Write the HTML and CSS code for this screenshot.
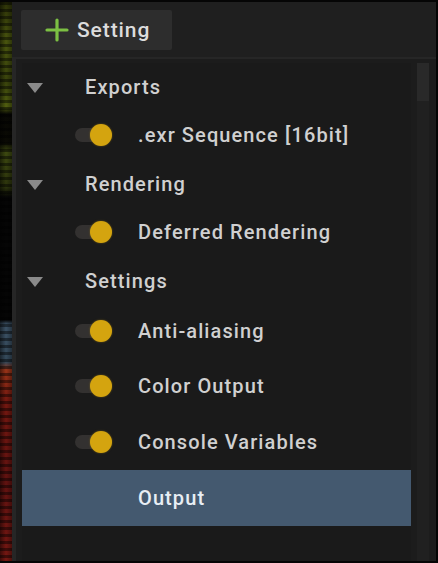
FILE: index.html
```html
<!DOCTYPE html>
<html>
<head>
<meta charset="utf-8">
<link rel="stylesheet" href="styles.css">
</head>
<body>
<div class="frame">
  <div class="strip"></div>
  <div class="main">
    <div class="toolbar">
      <div class="add-btn">
        <svg class="plus" width="24" height="24" viewBox="0 0 24 24"><path d="M12 2v20M2 12h20" stroke="#7cc043" stroke-width="3.2" stroke-linecap="round"/></svg>
        <span>Setting</span>
      </div>
    </div>
    <div class="panel">
      <div class="tree">
        <div class="row group r48"><span class="arrow"></span><span class="label">Exports</span></div>
        <div class="row leaf r48"><span class="toggle"><span class="knob"></span></span><span class="label">.exr Sequence [16bit]</span></div>
        <div class="row group r49"><span class="arrow"></span><span class="label">Rendering</span></div>
        <div class="row leaf r48"><span class="toggle"><span class="knob"></span></span><span class="label">Deferred Rendering</span></div>
        <div class="row group r49"><span class="arrow"></span><span class="label">Settings</span></div>
        <div class="row leaf r52"><span class="toggle"><span class="knob"></span></span><span class="label">Anti-aliasing</span></div>
        <div class="row leaf r57"><span class="toggle"><span class="knob"></span></span><span class="label">Color Output</span></div>
        <div class="row leaf r56"><span class="toggle"><span class="knob"></span></span><span class="label">Console Variables</span></div>
        <div class="row leaf selected r56"><span class="label">Output</span></div>
      </div>
      <div class="scrollbar"><div class="thumb"></div></div>
    </div>
  </div>
</div>
</body>
</html>
```
FILE: styles.css
```css
html, body {
  margin: 0;
  padding: 0;
  background: #000;
}
.frame {
  width: 438px;
  height: 563px;
  display: flex;
  box-sizing: border-box;
  border-top: 2px solid #050505;
  border-right: 2px solid #050505;
  border-bottom: 2px solid #050505;
  font-family: Roboto, "Liberation Sans", sans-serif;
  overflow: hidden;
}
.strip {
  width: 12px;
  flex: none;
  background:
    repeating-linear-gradient(to bottom, rgba(0,0,0,0.45) 0px, rgba(0,0,0,0.45) 3px, rgba(0,0,0,0) 3px, rgba(0,0,0,0) 7px),
    linear-gradient(to right, rgba(0,0,0,0.5) 0px, rgba(0,0,0,0) 6px, rgba(0,0,0,0.35) 12px),
    linear-gradient(to bottom,
    #2e3408 0px, #4a560e 40px, #3a440c 80px, #52600f 105px,
    #080804 112px, #0a0a04 140px, #3e4a10 150px, #2c340c 185px,
    #050505 195px, #050505 318px,
    #3c5266 322px, #34495a 360px, #9a3418 368px, #761810 400px, #621210 480px, #781812 563px);
}
.main {
  flex: 1;
  display: flex;
  flex-direction: column;
  background: #1d1d1d;
}
.toolbar {
  height: 55px;
  flex: none;
  padding: 8px 0 0 9px;
  box-sizing: border-box;
  background: #1f1f1f;
}
.add-btn {
  width: 151px;
  height: 40px;
  background: #2d2d2d;
  border-radius: 2px;
  display: flex;
  align-items: center;
  box-sizing: border-box;
  padding-left: 24px;
  gap: 8px;
  color: #dcdcdc;
  font-size: 21px;
  font-weight: 500;
  letter-spacing: 0.9px;
}
.plus { flex: none; }
.panel {
  flex: 1;
  display: flex;
  border-top: 2px solid #262626;
  border-left: 4px solid #262626;
  background: #1c1c1c;
  padding: 4px 4px 0 6px;
}
.tree {
  width: 389px;
  flex: none;
  background: #1a1a1a;
}
.row {
  display: flex;
  align-items: center;
  color: #d0d0d0;
  font-size: 20px;
  font-weight: 500;
  letter-spacing: 1.1px;
}
.r48 { height: 48px; }
.r49 { height: 49px; }
.r52 { height: 52px; }
.r56 { height: 56px; }
.r57 { height: 57px; }
.group { padding-left: 5px; }
.arrow {
  width: 0;
  height: 0;
  border-left: 8.5px solid transparent;
  border-right: 8.5px solid transparent;
  border-top: 10px solid #8a8a8a;
  margin-right: 42px;
  margin-top: 2px;
}
.leaf { padding-left: 53px; }
.toggle {
  width: 37px;
  height: 22px;
  position: relative;
  margin-right: 26px;
  flex: none;
}
.toggle::before {
  content: "";
  position: absolute;
  left: 0;
  top: 4px;
  width: 28px;
  height: 14px;
  border-radius: 7px;
  background: #333130;
}
.knob {
  position: absolute;
  right: 0;
  top: 0;
  width: 22px;
  height: 22px;
  border-radius: 50%;
  background: #d4a40f;
  box-shadow: 0 0 2px rgba(212, 164, 15, 0.5);
}
.selected {
  background: #44596f;
  color: #e8eef4;
  padding-left: 116px;
}
.scrollbar {
  width: 12px;
  margin-left: 6px;
  background: #202020;
}
.thumb {
  height: 38px;
  background: #292929;
}
```
